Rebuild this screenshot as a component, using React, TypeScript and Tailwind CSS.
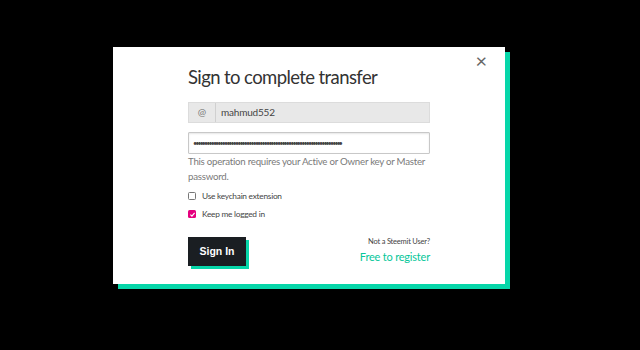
import React from 'react';

const font = { fontFamily: 'Lato, "Open Sans", sans-serif' };

export default function App() {
  return (
    <div className="w-[640px] h-[350px] bg-black pl-[113px] pt-[47px]" style={font}>
      <div className="relative w-[392px] h-[237px] bg-white shadow-[5px_5px_0_#06d6a9] pt-[18px] pl-[75px] pr-[75px]">
        <button className="absolute right-[18px] top-[3px] text-[20px] leading-none text-[#666]">×</button>
        <h2 className="text-[18.5px] leading-[24px] tracking-[-0.6px] text-[#333]">Sign to complete transfer</h2>

        <div className="mt-[13px] flex h-[21px] bg-[#e8e8e8] border border-[#dcdcdc]">
          <span className="w-[27px] flex items-center justify-center text-[10px] text-[#777] border-r border-[#d0d0d0]">@</span>
          <span className="flex items-center pl-[5px] text-[10px] tracking-[-0.2px] text-[#444]">mahmud552</span>
        </div>

        <div className="mt-[9px] h-[22px] border border-[#c8c8c8] rounded-[1px] shadow-[inset_0_1px_2px_rgba(0,0,0,0.1)] flex items-center pl-[4px] text-[7px] tracking-[-1.85px] text-[#444] leading-none">
          {'•'.repeat(67)}
        </div>

        <p className="text-[9.7px] leading-[15px] tracking-[-0.25px] text-[#7a7a7a]">
          This operation requires your Active or Owner key or Master password.
        </p>

        <label className="mt-[6px] h-[12px] flex items-center gap-[6px] text-[8.3px] tracking-[-0.25px] text-[#444]">
          <span className="w-[8px] h-[8px] border border-[#777] rounded-[1.5px] bg-white" />
          Use keychain extension
        </label>
        <label className="mt-[6px] h-[12px] flex items-center gap-[6px] text-[8.3px] tracking-[-0.25px] text-[#444]">
          <span className="w-[8px] h-[8px] rounded-[1.5px] bg-[#e5007e] flex items-center justify-center">
            <svg viewBox="0 0 10 10" className="w-[7px] h-[7px]">
              <path d="M2 5.2 L4.2 7.3 L8 2.8" fill="none" stroke="white" strokeWidth="1.6" />
            </svg>
          </span>
          Keep me logged in
        </label>

        <div className="mt-[17px] flex items-start justify-between">
          <button
            className="w-[58px] h-[29px] bg-[#1a1e22] text-white font-bold text-[10.5px] shadow-[3px_3px_0_#06d6a9]"
            style={{ fontFamily: '"Liberation Sans", Arial, sans-serif' }}
          >
            Sign In
          </button>
          <div className="flex flex-col items-end">
            <span className="text-[7.5px] tracking-[-0.2px] text-[#444] leading-[10px]">Not a Steemit User?</span>
            <span className="mt-[2px] text-[11px] tracking-[-0.2px] text-[#06c79a] leading-[16px]">Free to register</span>
          </div>
        </div>
      </div>
    </div>
  );
}
